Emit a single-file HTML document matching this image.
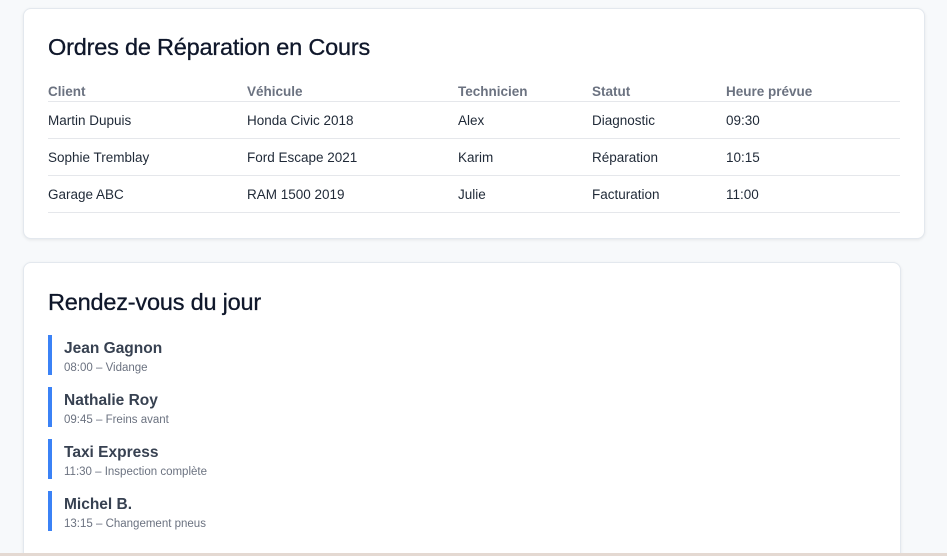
<!DOCTYPE html>
<html><head><meta charset="utf-8"><style>
html,body{margin:0;padding:0;width:947px;height:556px;overflow:hidden;}
body{background:#f7f9fb;font-family:"Liberation Sans",sans-serif;color:#111827;position:relative;}
.card{position:absolute;background:#fff;border:1px solid #e3e8ee;border-radius:8px;box-shadow:0 1px 3px rgba(0,0,0,0.08);box-sizing:border-box;}
h2{margin:0;font-size:23.5px;font-weight:normal;color:#0f172a;position:absolute;left:24px;letter-spacing:-0.2px;-webkit-text-stroke:0.3px #0f172a;}
table{position:absolute;left:24px;top:75px;width:852px;border-collapse:collapse;font-size:13.5px;}
th{text-align:left;color:#6b7280;font-weight:bold;height:17px;padding:0;border-bottom:1px solid #e5e7eb;vertical-align:top;}
td{height:36px;padding:0;border-bottom:1px solid #e5e7eb;color:#1f2937;}
.it{position:absolute;left:24px;width:300px;height:40px;border-left:4px solid #3b82f6;padding-left:12px;box-sizing:border-box;}
.n{font-size:15.5px;font-weight:bold;color:#374151;position:absolute;top:5px;left:12px;white-space:nowrap;}
.s{font-size:11.5px;color:#6b7280;position:absolute;top:27px;left:12px;white-space:nowrap;}
.bl{position:absolute;left:0;right:0;top:553px;height:3px;background:#e4d9d2;}
</style></head><body>
<div class="card" style="left:23px;top:8px;width:902px;height:231px;">
<h2 style="top:25px;">Ordres de Réparation en Cours</h2>
<table>
<tr><th style="width:199px">Client</th><th style="width:211px">Véhicule</th><th style="width:134px">Technicien</th><th style="width:134px">Statut</th><th>Heure prévue</th></tr>
<tr><td>Martin Dupuis</td><td>Honda Civic 2018</td><td>Alex</td><td>Diagnostic</td><td>09:30</td></tr>
<tr><td>Sophie Tremblay</td><td>Ford Escape 2021</td><td>Karim</td><td>Réparation</td><td>10:15</td></tr>
<tr><td>Garage ABC</td><td>RAM 1500 2019</td><td>Julie</td><td>Facturation</td><td>11:00</td></tr>
</table>
</div>
<div class="card" style="left:23px;top:262px;width:878px;height:300px;">
<h2 style="top:26px;">Rendez-vous du jour</h2>
<div class="it" style="top:72px"><div class="n">Jean Gagnon</div><div class="s">08:00 – Vidange</div></div>
<div class="it" style="top:124px"><div class="n">Nathalie Roy</div><div class="s">09:45 – Freins avant</div></div>
<div class="it" style="top:176px"><div class="n">Taxi Express</div><div class="s">11:30 – Inspection complète</div></div>
<div class="it" style="top:228px"><div class="n">Michel B.</div><div class="s">13:15 – Changement pneus</div></div>
</div>
<div class="bl"></div>
</body></html>
